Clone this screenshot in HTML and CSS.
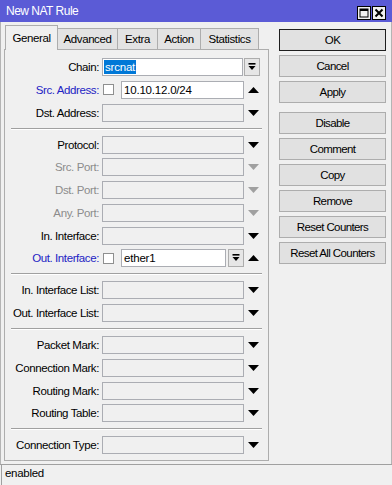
FILE: index.html
```html
<!DOCTYPE html>
<html lang="en">
<head>
<meta charset="UTF-8">
<title>New NAT Rule</title>
<link rel="stylesheet" href="styles.css">
</head>
<body>

<div class="window">
    <div class="titlebar">
        <span class="title">New NAT Rule</span>
        <div class="title-btns">
            <span class="tbtn">
                <svg width="12" height="12" viewBox="0 0 12 12"><rect x="2" y="2" width="8" height="8" fill="none" stroke="#000" stroke-width="1"/><rect x="2" y="2" width="8" height="2" fill="#000"/></svg>
            </span>
            <span class="tbtn">
                <svg width="12" height="12" viewBox="0 0 12 12"><path d="M2.5 2.5 L9.5 9.5 M9.5 2.5 L2.5 9.5" stroke="#000" stroke-width="2"/></svg>
            </span>
        </div>
    </div>

    <div class="main">
        <div class="left">
            <div class="tabs">
                <div class="tab active w-general">General</div>
                <div class="tab w-advanced">Advanced</div>
                <div class="tab w-extra">Extra</div>
                <div class="tab w-action">Action</div>
                <div class="tab w-stats">Statistics</div>
            </div>

            <div class="panel">
                <!-- addresses -->
                <div class="section">
                    <div class="row">
                        <label class="lbl">Chain:</label>
                        <div class="field"><div class="input filled chain"><span class="sel">srcnat</span></div></div>
                        <div class="extra"><span class="dd"><svg width="8" height="8" viewBox="0 0 8 8"><rect x="0.5" y="0" width="7" height="1.6" fill="#000"/><path d="M0.5 3 L7.5 3 L4 7 Z" fill="#000"/></svg></span></div>
                    </div>
                    <div class="row">
                        <label class="lbl blue">Src. Address:</label>
                        <div class="field"><span class="chk"></span><div class="input filled">10.10.12.0/24</div></div>
                        <div class="extra"><svg class="arrow" width="11" height="6" viewBox="0 0 11 6"><path d="M0 6 L11 6 L5.5 0 Z" fill="#000"/></svg></div>
                    </div>
                    <div class="row">
                        <label class="lbl">Dst. Address:</label>
                        <div class="field"><div class="input"></div></div>
                        <div class="extra"><svg class="arrow" width="11" height="6" viewBox="0 0 11 6"><path d="M0 0 L11 0 L5.5 6 Z" fill="#000"/></svg></div>
                    </div>
                </div>

                <div class="sep"></div>

                <!-- protocol and interfaces -->
                <div class="section">
                    <div class="row">
                        <label class="lbl">Protocol:</label>
                        <div class="field"><div class="input"></div></div>
                        <div class="extra"><svg class="arrow" width="11" height="6" viewBox="0 0 11 6"><path d="M0 0 L11 0 L5.5 6 Z" fill="#000"/></svg></div>
                    </div>
                    <div class="row">
                        <label class="lbl off">Src. Port:</label>
                        <div class="field"><div class="input"></div></div>
                        <div class="extra"><svg class="arrow" width="11" height="6" viewBox="0 0 11 6"><path d="M0 0 L11 0 L5.5 6 Z" fill="#a0a0a0"/></svg></div>
                    </div>
                    <div class="row">
                        <label class="lbl off">Dst. Port:</label>
                        <div class="field"><div class="input"></div></div>
                        <div class="extra"><svg class="arrow" width="11" height="6" viewBox="0 0 11 6"><path d="M0 0 L11 0 L5.5 6 Z" fill="#a0a0a0"/></svg></div>
                    </div>
                    <div class="row">
                        <label class="lbl off">Any. Port:</label>
                        <div class="field"><div class="input"></div></div>
                        <div class="extra"><svg class="arrow" width="11" height="6" viewBox="0 0 11 6"><path d="M0 0 L11 0 L5.5 6 Z" fill="#a0a0a0"/></svg></div>
                    </div>
                    <div class="row">
                        <label class="lbl">In. Interface:</label>
                        <div class="field"><div class="input"></div></div>
                        <div class="extra"><svg class="arrow" width="11" height="6" viewBox="0 0 11 6"><path d="M0 0 L11 0 L5.5 6 Z" fill="#000"/></svg></div>
                    </div>
                    <div class="row">
                        <label class="lbl blue">Out. Interface:</label>
                        <div class="field">
                            <span class="chk"></span>
                            <div class="input filled">ether1</div>
                            <span class="dd inline"><svg width="8" height="8" viewBox="0 0 8 8"><rect x="0.5" y="0" width="7" height="1.6" fill="#000"/><path d="M0.5 3 L7.5 3 L4 7 Z" fill="#000"/></svg></span>
                        </div>
                        <div class="extra"><svg class="arrow" width="11" height="6" viewBox="0 0 11 6"><path d="M0 6 L11 6 L5.5 0 Z" fill="#000"/></svg></div>
                    </div>
                </div>

                <div class="sep"></div>

                <!-- interface lists -->
                <div class="section">
                    <div class="row">
                        <label class="lbl">In. Interface List:</label>
                        <div class="field"><div class="input"></div></div>
                        <div class="extra"><svg class="arrow" width="11" height="6" viewBox="0 0 11 6"><path d="M0 0 L11 0 L5.5 6 Z" fill="#000"/></svg></div>
                    </div>
                    <div class="row">
                        <label class="lbl">Out. Interface List:</label>
                        <div class="field"><div class="input"></div></div>
                        <div class="extra"><svg class="arrow" width="11" height="6" viewBox="0 0 11 6"><path d="M0 0 L11 0 L5.5 6 Z" fill="#000"/></svg></div>
                    </div>
                </div>

                <div class="sep"></div>

                <!-- marks -->
                <div class="section">
                    <div class="row">
                        <label class="lbl">Packet Mark:</label>
                        <div class="field"><div class="input"></div></div>
                        <div class="extra"><svg class="arrow" width="11" height="6" viewBox="0 0 11 6"><path d="M0 0 L11 0 L5.5 6 Z" fill="#000"/></svg></div>
                    </div>
                    <div class="row">
                        <label class="lbl">Connection Mark:</label>
                        <div class="field"><div class="input"></div></div>
                        <div class="extra"><svg class="arrow" width="11" height="6" viewBox="0 0 11 6"><path d="M0 0 L11 0 L5.5 6 Z" fill="#000"/></svg></div>
                    </div>
                    <div class="row">
                        <label class="lbl">Routing Mark:</label>
                        <div class="field"><div class="input"></div></div>
                        <div class="extra"><svg class="arrow" width="11" height="6" viewBox="0 0 11 6"><path d="M0 0 L11 0 L5.5 6 Z" fill="#000"/></svg></div>
                    </div>
                    <div class="row">
                        <label class="lbl">Routing Table:</label>
                        <div class="field"><div class="input"></div></div>
                        <div class="extra"><svg class="arrow" width="11" height="6" viewBox="0 0 11 6"><path d="M0 0 L11 0 L5.5 6 Z" fill="#000"/></svg></div>
                    </div>
                </div>

                <div class="sep"></div>

                <div class="section">
                    <div class="row">
                        <label class="lbl">Connection Type:</label>
                        <div class="field"><div class="input"></div></div>
                        <div class="extra"><svg class="arrow" width="11" height="6" viewBox="0 0 11 6"><path d="M0 0 L11 0 L5.5 6 Z" fill="#000"/></svg></div>
                    </div>
                </div>
            </div>
        </div>

        <div class="side">
            <div class="btn default">OK</div>
            <div class="btn">Cancel</div>
            <div class="btn">Apply</div>
            <div class="btn group">Disable</div>
            <div class="btn">Comment</div>
            <div class="btn">Copy</div>
            <div class="btn">Remove</div>
            <div class="btn">Reset Counters</div>
            <div class="btn">Reset All Counters</div>
        </div>
    </div>

    <div class="status"><span class="status-cell">enabled</span></div>
</div>

</body>
</html>
```

FILE: styles.css
```css
:root {
    --bg: #f0f0f0;
    --line: #adadad;
    --title: #5b5bd6;
}

* {
    margin: 0; padding: 0;
    box-sizing: border-box;
}

body {
    width: 392px;
    height: 485px;
    overflow: hidden;
    background: var(--bg);
    font-family: "Liberation Sans", Arial, sans-serif;
    font-size: 11.5px;
    color: #000;
}

.window {
    height: 485px;
    display: flex;
    flex-direction: column;
}

/* title bar */
.titlebar {
    height: 22px;
    flex: none;
    background: var(--title);
    color: #fff;
    display: flex;
    justify-content: space-between;
    padding: 0 6px 0 6px;
}

.title {
    font-size: 12px;
    letter-spacing: -0.5px;
    line-height: 23px;
}

.title-btns {
    display: flex;
    gap: 1px;
    margin-top: 6px;
}

.tbtn {
    width: 14px;
    height: 14px;
    border: 1px solid #000;
    background: #f0f0f0;
    display: flex;
    align-items: center;
    justify-content: center;
}

/* main area */
.main {
    flex: 1;
    display: flex;
    padding: 3px 5px 0 3px;
    border-left: 1px solid #b4b4b4;
    border-right: 1px solid #b4b4b4;
}

.left {
    width: 265px;
    display: flex;
    flex-direction: column;
}

.tabs {
    display: flex;
    align-items: flex-end;
    height: 24px;
    padding-left: 1px;
}

.tab {
    height: 21px;
    border: 1px solid var(--line);
    border-bottom: none;
    background: #e3e3e3;
    text-align: center;
    line-height: 20px;
    margin-left: -1px;
    letter-spacing: -0.4px;
}

.tab.active {
    height: 25px;
    margin-left: 0;
    margin-bottom: -1px;
    background: var(--bg);
    line-height: 24px;
    position: relative;
    z-index: 1;
}

.w-general { width: 53px; }
.w-advanced { width: 61px; }
.w-extra { width: 41px; }
.w-action { width: 44px; }
.w-stats { width: 59px; }

.panel {
    border: 1px solid var(--line);
    background: var(--bg);
    padding: 8px 0 6px;
}

.section {
    display: flex;
    flex-direction: column;
    gap: 4.75px;
}

.sep {
    border-top: 1px solid #a0a0a0;
    border-bottom: 1px solid #fff;
    margin: 6px 6px;
}

.row {
    display: grid;
    grid-template-columns: 97px 142px 1fr;
    height: 18px;
    align-items: center;
}

.lbl {
    text-align: right;
    padding-right: 3px;
    white-space: nowrap;
    letter-spacing: -0.4px;
}

.lbl.blue { color: #2323c4; }
.lbl.off { color: #8c8c8c; }

.field {
    display: flex;
    align-items: center;
    height: 18px;
}

.input {
    flex: 1;
    height: 18px;
    border: 1px solid #abadb3;
    background: var(--bg);
    padding-left: 2px;
    line-height: 16px;
    white-space: nowrap;
    overflow: hidden;
    letter-spacing: -0.2px;
}

.input.filled { background: #fff; }

.input.chain {
    flex: 0 0 141px;
    padding-left: 1px;
}

.sel {
    background: #0078d7;
    color: #fff;
    padding: 1px 1px;
}

.chk {
    width: 11px;
    height: 11px;
    flex: none;
    border: 1px solid #8e8f8f;
    background: #fff;
    margin: 0 7px 0 1px;
}

.dd {
    width: 16px;
    height: 18px;
    flex: none;
    border: 1px solid var(--line);
    background: #e6e6e6;
    display: flex;
    align-items: center;
    justify-content: center;
}

.dd.inline { margin-left: 2px; }

.extra {
    display: flex;
    align-items: center;
}

.arrow {
    display: block;
    margin-left: 4px;
}

/* side buttons */
.side {
    width: 107px;
    margin-left: 10px;
    margin-top: 4px;
    display: flex;
    flex-direction: column;
    gap: 4px;
}

.btn {
    height: 22px;
    border: 1px solid var(--line);
    background: #e1e1e1;
    text-align: center;
    line-height: 20px;
    letter-spacing: -0.6px;
    white-space: nowrap;
}

.btn.default { border-color: #1e1e1e; }
.btn.group { margin-top: 5px; }

/* status bar */
.status {
    height: 21px;
    flex: none;
    border-top: 1px solid #a0a0a0;
    padding-left: 1px;
}

.status-cell {
    display: block;
    height: 20px;
    border-left: 1px solid #a0a0a0;
    padding-left: 3px;
    line-height: 16px;
    letter-spacing: -0.3px;
}
```
